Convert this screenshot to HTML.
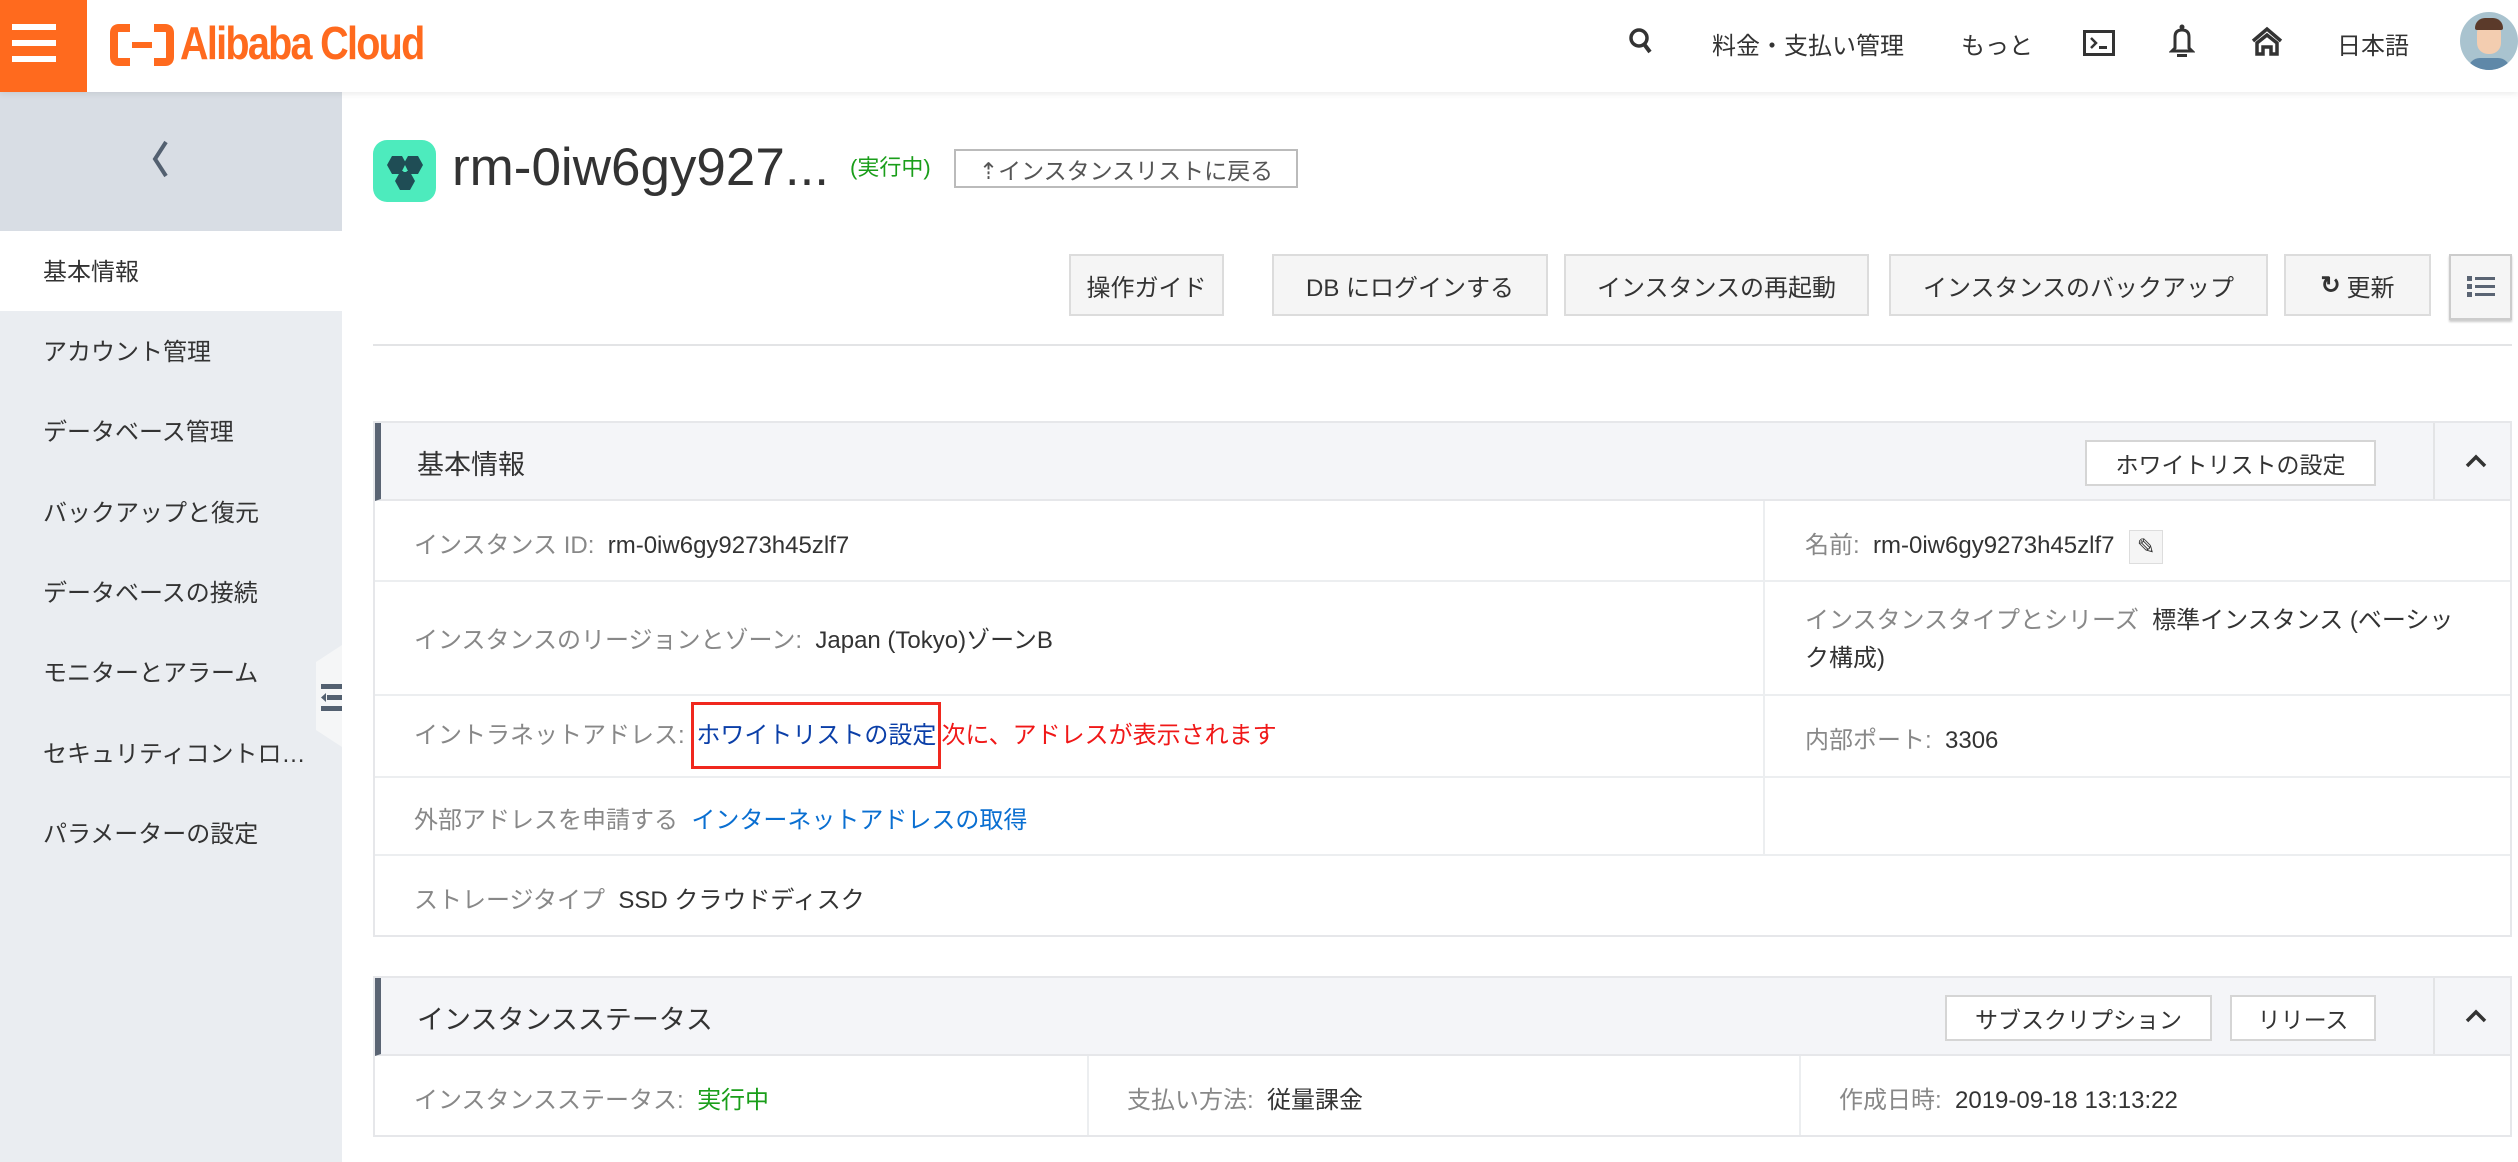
<!DOCTYPE html>
<html><head><meta charset="utf-8">
<style>
*{box-sizing:border-box;margin:0;padding:0}
body{width:2518px;height:1162px;overflow:hidden;background:#fff;font-family:"Liberation Sans","Noto Sans CJK JP",sans-serif;color:#333;position:relative}
.abs{position:absolute}
.hdr{left:0;top:0;width:2518px;height:92px;background:#fff;box-shadow:0 2px 6px rgba(0,0,0,.08);z-index:5}
.nav{font-size:24px;color:#333;top:26px}
.side{left:0;top:92px;width:342px;height:1070px;background:#eaedf1}
.si{left:0;width:342px;height:80px;line-height:84px;padding-left:43px;font-size:24px;color:#333}
.btn{background:#f5f5f5;border:2px solid #dcdcdc;font-size:24px;color:#333;display:flex;align-items:center;justify-content:center}
.panel{left:373px;width:2139px;border:2px solid #e6e7ea}
.ph{background:#f4f5f8;border-bottom:2px solid #e6e7ea;border-left:6px solid #5a6473}
.row{border-bottom:2px solid #eceef0;font-size:24px}
.lab{color:#888}
.wb{background:#fff;border:2px solid #d5d5d5;font-size:23px;color:#333;display:flex;align-items:center;justify-content:center}
</style></head><body>
<div class="abs hdr">
  <div class="abs" style="left:0;top:0;width:87px;height:92px;background:#ff6a1e">
    <div class="abs" style="left:12px;top:24px;width:44px;height:6px;background:#fff"></div>
    <div class="abs" style="left:12px;top:40px;width:44px;height:6px;background:#fff"></div>
    <div class="abs" style="left:12px;top:56px;width:44px;height:6px;background:#fff"></div>
  </div>
  <svg class="abs" style="left:110px;top:24px" width="64" height="42" viewBox="0 0 64 42"><path d="M20 4H9Q4 4 4 9V33Q4 38 9 38H20M44 4H55Q60 4 60 9V33Q60 38 55 38H44" fill="none" stroke="#ff6a1e" stroke-width="8"/><rect x="22" y="18" width="20" height="6" fill="#ff6a1e"/></svg>
  <div class="abs" style="left:180px;top:16px;font-size:46px;color:#ff6a1e;letter-spacing:-2px;transform:scaleX(.86);transform-origin:left;font-weight:bold">Alibaba Cloud</div>
  <svg class="abs" style="left:1628px;top:27px" width="26" height="28" viewBox="0 0 26 28"><circle cx="11" cy="11" r="8" fill="none" stroke="#333" stroke-width="3.5"/><path d="M16 17L22 25" stroke="#333" stroke-width="4"/></svg>
  <div class="abs nav" style="left:1712px">料金・支払い管理</div>
  <div class="abs nav" style="left:1961px">もっと</div>
  <svg class="abs" style="left:2083px;top:30px" width="32" height="26" viewBox="0 0 32 26"><rect x="1.5" y="1.5" width="29" height="23" fill="none" stroke="#333" stroke-width="3"/><path d="M8 8l5 5-5 5" fill="none" stroke="#333" stroke-width="2.5"/><rect x="16" y="16" width="8" height="3" fill="#333"/></svg>
  <svg class="abs" style="left:2169px;top:24px" width="26" height="34" viewBox="0 0 26 34"><circle cx="13" cy="3" r="2.5" fill="#333"/><path d="M6 24V13Q6 6 13 6Q20 6 20 13V24L23 27H3Z" fill="none" stroke="#333" stroke-width="3"/><rect x="8" y="30" width="10" height="3" fill="#333"/></svg>
  <svg class="abs" style="left:2251px;top:26px" width="32" height="30" viewBox="0 0 32 30"><path d="M2 15L16 3 30 15M6 28V17L16 9 26 17V28H20V21H12V28Z" fill="none" stroke="#333" stroke-width="3.5"/></svg>
  <div class="abs nav" style="left:2337px">日本語</div>
  <div class="abs" style="left:2460px;top:12px;width:58px;height:58px;border-radius:50%;background:#a9c3cf;overflow:hidden">
    <div class="abs" style="left:17px;top:10px;width:24px;height:32px;border-radius:11px;background:#f3cdb0"></div>
    <div class="abs" style="left:15px;top:6px;width:28px;height:12px;border-radius:10px 10px 2px 2px;background:#5b3a2a"></div>
    <div class="abs" style="left:8px;top:46px;width:42px;height:20px;border-radius:12px 12px 0 0;background:#5f88a8"></div>
  </div>
</div>

<div class="abs side">
  <div class="abs" style="left:0;top:0;width:342px;height:139px;background:#d8dde4"></div>
  <svg class="abs" style="left:150px;top:47px" width="20" height="40" viewBox="0 0 20 40"><path d="M16 3L5 20 16 37" fill="none" stroke="#536070" stroke-width="4"/></svg>
  <div class="abs si" style="top:139px;background:#fff">基本情報</div>
  <div class="abs si" style="top:219px">アカウント管理</div>
  <div class="abs si" style="top:299px">データベース管理</div>
  <div class="abs si" style="top:380px">バックアップと復元</div>
  <div class="abs si" style="top:460px">データベースの接続</div>
  <div class="abs si" style="top:540px">モニターとアラーム</div>
  <div class="abs si" style="top:621px">セキュリティコントロ…</div>
  <div class="abs si" style="top:701px">パラメーターの設定</div>
</div>
<svg class="abs" style="left:316px;top:645px" width="26" height="102" viewBox="0 0 26 102"><path d="M26 0L0 17V85L26 102Z" fill="#f5f6f7"/><rect x="5" y="39" width="21" height="5" fill="#536070"/><rect x="11" y="50" width="15" height="5" fill="#536070"/><path d="M5 52.5L10 48V57Z" fill="#536070"/><rect x="5" y="61" width="21" height="5" fill="#536070"/></svg>

<!-- title -->
<div class="abs" style="left:373px;top:140px;width:63px;height:62px;border-radius:14px;background:#4debbd"></div>
<svg class="abs" style="left:383px;top:150px" width="44" height="42" viewBox="0 0 44 42"><path d="M4 15L9 6H19L24 15 19 24H9Z" fill="#1f4d55"/><path d="M20 15L25 6H35L40 15 35 24H25Z" fill="#1f4d55"/><path d="M12 31L17 22H27L32 31 27 40H17Z" fill="#1f4d55"/><path d="M22 15L25 21H19Z" fill="#4debbd"/></svg>
<div class="abs" style="left:452px;top:137px;font-size:53px;color:#333;line-height:62px">rm-0iw6gy927...</div>
<div class="abs" style="left:850px;top:150px;font-size:22px;color:#1a9e1a">(実行中)</div>
<div class="abs wb" style="left:954px;top:149px;width:344px;height:39px;border-color:#bbb;color:#555">⇡インスタンスリストに戻る</div>

<div class="abs btn" style="left:1069px;top:254px;width:155px;height:62px">操作ガイド</div>
<div class="abs btn" style="left:1272px;top:254px;width:276px;height:62px">DB にログインする</div>
<div class="abs btn" style="left:1564px;top:254px;width:305px;height:62px">インスタンスの再起動</div>
<div class="abs btn" style="left:1889px;top:254px;width:379px;height:62px">インスタンスのバックアップ</div>
<div class="abs btn" style="left:2284px;top:254px;width:147px;height:62px"><span style="font-weight:bold;margin-right:6px">↻</span>更新</div>
<div class="abs btn" style="left:2449px;top:254px;width:63px;height:66px;border-color:#ccc;box-shadow:0 2px 2px #ccc">
  <svg width="28" height="24" viewBox="0 0 28 24"><g fill="#5a6473"><rect x="0" y="1" width="5" height="5"/><rect x="8" y="2" width="20" height="3"/><rect x="0" y="9" width="5" height="5"/><rect x="8" y="10" width="20" height="3"/><rect x="0" y="17" width="5" height="5"/><rect x="8" y="18" width="20" height="3"/></g></svg>
</div>
<div class="abs" style="left:373px;top:344px;width:2139px;height:2px;background:#e3e4e6"></div>

<!-- panel 1 -->
<div class="abs panel" style="top:421px;height:516px">
  <div class="abs ph" style="left:0;top:0;width:2135px;height:78px">
    <div class="abs" style="left:36px;top:20px;font-size:27px;color:#333">基本情報</div>
    <div class="abs wb" style="left:1704px;top:17px;width:291px;height:46px">ホワイトリストの設定</div>
    <div class="abs" style="left:2052px;top:0;width:2px;height:76px;background:#e3e4e6"></div>
    <svg class="abs" style="left:2084px;top:30px" width="22" height="16" viewBox="0 0 22 16"><path d="M2 13L11 4 20 13" fill="none" stroke="#333" stroke-width="3.5"/></svg>
  </div>
  <div class="abs" style="left:1388px;top:78px;width:2px;height:355px;background:#eceef0"></div>
  <div class="abs row" style="left:0;top:78px;width:2135px;height:81px">
    <div class="abs" style="left:39px;top:24px"><span class="lab">インスタンス ID:</span>&nbsp; rm-0iw6gy9273h45zlf7</div>
    <div class="abs" style="left:1430px;top:24px"><span class="lab">名前:</span>&nbsp; rm-0iw6gy9273h45zlf7
      <span style="display:inline-block;vertical-align:middle;width:34px;height:34px;border:1px solid #ddd;background:#f5f5f5;margin-left:8px;text-align:center;line-height:32px;font-size:22px">✎</span></div>
  </div>
  <div class="abs row" style="left:0;top:159px;width:2135px;height:114px">
    <div class="abs" style="left:39px;top:38px"><span class="lab">インスタンスのリージョンとゾーン:</span>&nbsp; Japan (Tokyo)ゾーンB</div>
    <div class="abs" style="left:1430px;top:20px;width:660px;line-height:38px"><span class="lab">インスタンスタイプとシリーズ</span>&nbsp; 標準インスタンス (ベーシック構成)</div>
  </div>
  <div class="abs row" style="left:0;top:273px;width:2135px;height:82px">
    <div class="abs" style="left:39px;top:6px;line-height:67px;white-space:nowrap"><span class="lab">イントラネットアドレス:</span> <span style="color:#0b3fa8;display:inline-block;border:3px solid #f0281e;padding:0 2px;height:67px;line-height:61px">ホワイトリストの設定</span><span style="color:#f01818">次に、アドレスが表示されます</span></div>
    <div class="abs" style="left:1430px;top:24px"><span class="lab">内部ポート:</span>&nbsp; 3306</div>
  </div>
  <div class="abs row" style="left:0;top:355px;width:2135px;height:78px">
    <div class="abs" style="left:39px;top:22px"><span class="lab">外部アドレスを申請する</span>&nbsp; <span style="color:#0a6fd1">インターネットアドレスの取得</span></div>
  </div>
  <div class="abs" style="left:0;top:433px;width:2135px;height:79px;font-size:24px">
    <div class="abs" style="left:39px;top:24px"><span class="lab">ストレージタイプ</span>&nbsp; SSD クラウドディスク</div>
  </div>
</div>

<!-- panel 2 -->
<div class="abs panel" style="top:976px;height:161px">
  <div class="abs ph" style="left:0;top:0;width:2135px;height:78px">
    <div class="abs" style="left:36px;top:20px;font-size:27px;color:#333">インスタンスステータス</div>
    <div class="abs wb" style="left:1564px;top:17px;width:267px;height:46px">サブスクリプション</div>
    <div class="abs wb" style="left:1849px;top:17px;width:146px;height:46px">リリース</div>
    <div class="abs" style="left:2052px;top:0;width:2px;height:76px;background:#e3e4e6"></div>
    <svg class="abs" style="left:2084px;top:30px" width="22" height="16" viewBox="0 0 22 16"><path d="M2 13L11 4 20 13" fill="none" stroke="#333" stroke-width="3.5"/></svg>
  </div>
  <div class="abs" style="left:712px;top:78px;width:2px;height:79px;background:#eceef0"></div>
  <div class="abs" style="left:1424px;top:78px;width:2px;height:79px;background:#eceef0"></div>
  <div class="abs" style="left:39px;top:102px;font-size:24px"><span class="lab">インスタンスステータス:</span>&nbsp; <span style="color:#1a9e1a">実行中</span></div>
  <div class="abs" style="left:752px;top:102px;font-size:24px"><span class="lab">支払い方法:</span>&nbsp; 従量課金</div>
  <div class="abs" style="left:1464px;top:102px;font-size:24px"><span class="lab">作成日時:</span>&nbsp; 2019-09-18 13:13:22</div>
</div>
</body></html>
